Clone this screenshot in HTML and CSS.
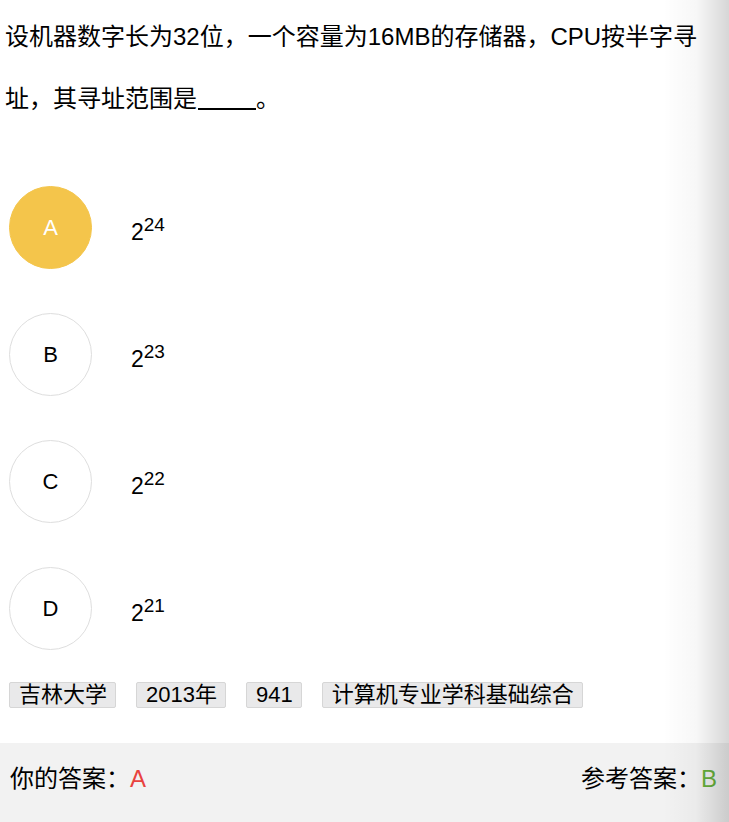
FILE: index.html
```html
<!DOCTYPE html>
<html lang="zh-CN">
<head>
<meta charset="utf-8">
<title>题目</title>
<link rel="stylesheet" href="styles.css">
</head>
<body>
<div class="page">
  <p class="question">设机器数字长为32位，一个容量为16MB的存储器，CPU按半字寻址，其寻址范围是<span class="blank"></span>。</p>

  <ul class="options">
    <li class="option">
      <span class="badge badge-selected">A</span>
      <span class="opt-text">2<sup>24</sup></span>
    </li>
    <li class="option">
      <span class="badge">B</span>
      <span class="opt-text">2<sup>23</sup></span>
    </li>
    <li class="option">
      <span class="badge">C</span>
      <span class="opt-text">2<sup>22</sup></span>
    </li>
    <li class="option">
      <span class="badge">D</span>
      <span class="opt-text">2<sup>21</sup></span>
    </li>
  </ul>

  <div class="tags">
    <span class="tag">吉林大学</span>
    <span class="tag">2013年</span>
    <span class="tag">941</span>
    <span class="tag">计算机专业学科基础综合</span>
  </div>

  <div class="answer-bar">
    <div class="answer">你的答案：<span class="mine">A</span></div>
    <div class="answer">参考答案：<span class="ref">B</span></div>
  </div>
</div>
<div class="edge-shadow"></div>
</body>
</html>
```

FILE: styles.css
```css
html, body {
  margin: 0;
  padding: 0;
  background: #ffffff;
}

body {
  font-family: "Liberation Sans", "Noto Sans CJK SC", sans-serif;
  color: #000000;
  overflow: hidden;
}

.page {
  width: 729px;
  min-height: 822px;
  display: flex;
  flex-direction: column;
}

.question {
  margin: 0;
  padding: 6px 22px 0 5px;
  font-size: 24px;
  line-height: 62px;
}

.blank {
  display: inline-block;
  width: 58px;
  height: 0;
  border-bottom: 2px solid #000;
  margin: 0 0 0 1px;
  vertical-align: -3px;
}

.options {
  list-style: none;
  margin: 56px 0 0 0;
  padding: 0 0 0 9px;
  display: flex;
  flex-direction: column;
  gap: 44px;
}

.option {
  display: flex;
  align-items: center;
  gap: 39px;
}

.badge {
  width: 81px;
  height: 81px;
  border: 1px solid #dedede;
  border-radius: 50%;
  display: flex;
  align-items: center;
  justify-content: center;
  font-size: 22px;
  color: #000;
  background: #fff;
}

.badge-selected {
  background: #f4c54b;
  border-color: #f4c54b;
  color: #ffffff;
}

.opt-text {
  font-size: 23px;
  line-height: 26px;
  padding-top: 8px;
}

.opt-text sup {
  font-size: 19px;
  vertical-align: 9px;
  line-height: 0;
}

.tags {
  margin-top: 32px;
  padding-left: 9px;
  display: flex;
  gap: 20px;
}

.tag {
  background: #e9e9ea;
  border: 1px solid #d6d6d6;
  border-radius: 2px;
  font-size: 22px;
  line-height: 24px;
  padding: 0 8px 0 9px;
}

.answer-bar {
  margin-top: 35px;
  flex: 1;
  background: #f2f2f2;
  display: flex;
  justify-content: space-between;
  align-items: flex-start;
  padding: 22px 12px 0 10px;
  font-size: 24px;
  line-height: 28px;
}

.mine {
  color: #e8423f;
}

.ref {
  color: #67b03b;
}

.edge-shadow {
  position: absolute;
  top: 0;
  right: 0;
  width: 66px;
  height: 822px;
  pointer-events: none;
  background: linear-gradient(to right, rgba(0, 0, 0, 0) 0%, rgba(0, 0, 0, 0.03) 50%, rgba(0, 0, 0, 0.16) 100%);
}
```
